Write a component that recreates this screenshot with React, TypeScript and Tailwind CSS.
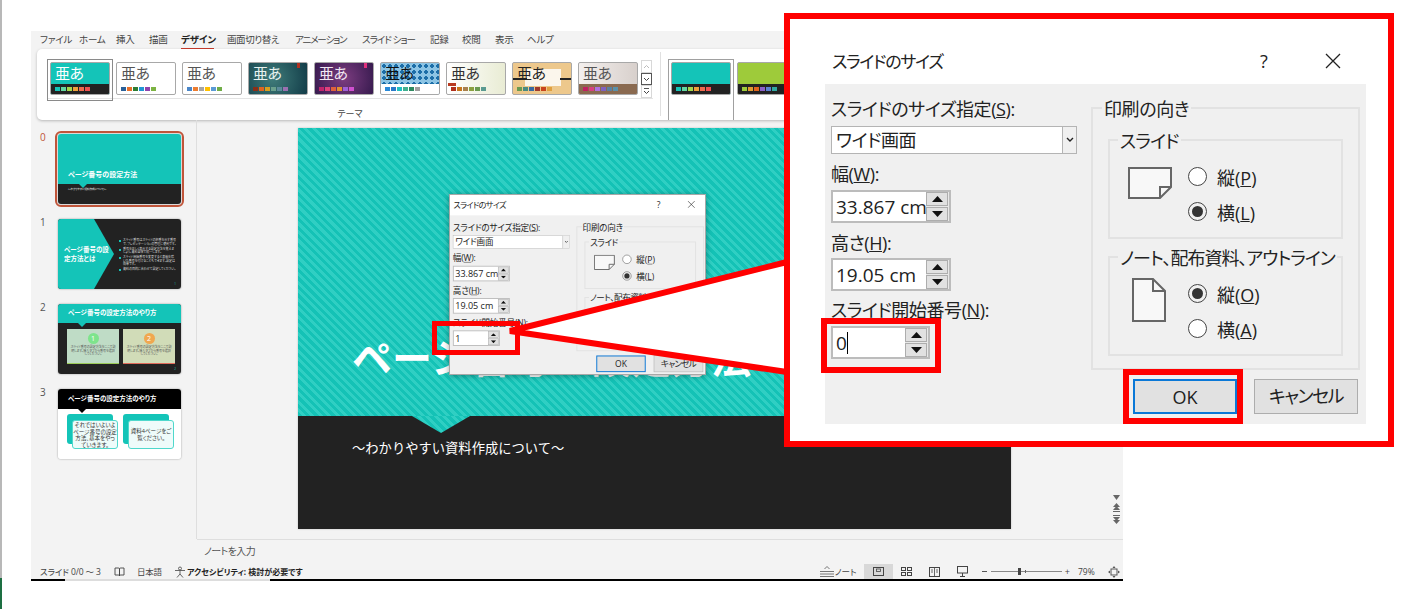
import React from "react";

const tabs: [string, string][] = [
  ["ファイル", "w-[26px]"], ["ホーム", "w-[24px]"], ["挿入", "w-[20px]"], ["描画", "w-[19px]"], ["デザイン", "w-[33px]"],
  ["画面切り替え", "w-[55px] tracking-[-0.4px]"], ["アニメーション", "w-[54px] tracking-[-1.1px]"], ["スライド ショー", "w-[55px] tracking-[-0.9px]"], ["記録", "w-[19px]"], ["校閲", "w-[20px]"], ["表示", "w-[19px]"], ["ヘルプ", "w-[24px]"],
];

type CardProps = { bg: string; text: string; swatches: string[]; band?: string; children?: React.ReactNode };

function ThemeCard({ bg, text, swatches, band = "", children }: CardProps) {
  return (
    <div className={`relative w-[60px] h-[33px] shrink-0 rounded-[2px] border border-[#a8a8a8] overflow-hidden flex flex-col ${bg}`}>
      {children}
      <div className={`relative flex-1 pl-[4px] pt-[1px] text-[15px] leading-[19px] tracking-[-0.5px] ${text}`}>亜あ</div>
      <div className={`relative h-[10px] flex gap-[1px] items-center pl-[4px] ${band}`}>
        {swatches.map((c, i) => (
          <span key={i} className="w-[5px] h-[3.5px]" style={{ backgroundColor: c }} />
        ))}
      </div>
    </div>
  );
}

function Gallery() {
  return (
    <div className="flex gap-[6px] w-[587px]">
      <div className="outline outline-[#8a8a8a] outline-offset-[2px]">
        <ThemeCard bg="bg-[#14c4b8]" text="text-white" band="bg-[#222222]" swatches={["#14c4b8", "#62d6a0", "#a4d64a", "#eda03c", "#f0694e", "#f05050"]} />
      </div>
      <ThemeCard bg="bg-white" text="text-[#555555]" swatches={["#2a6099", "#e8702a", "#2e7d32", "#2196d3", "#8e44ad", "#7cb342"]} />
      <ThemeCard bg="bg-white" text="text-[#555555]" swatches={["#4a86c8", "#ed7d31", "#a5a5a5", "#ffc000", "#5b9bd5", "#70ad47"]} />
      <ThemeCard bg="bg-[radial-gradient(circle_at_40%_50%,#3f7c7a,#123c48)]" text="text-[#e8f2f0]" swatches={["#8a2f18", "#e0641e", "#d8a01e", "#6aa08c", "#5a8a9a", "#9a70b0"]}>
        <span className="absolute right-[7px] top-0 w-[3px] h-[5px] bg-[#b03020]" />
      </ThemeCard>
      <ThemeCard bg="bg-[radial-gradient(circle_at_50%_50%,#7c3c80,#361a4e)]" text="text-[#f2e8f2]" swatches={["#c0246c", "#e0407c", "#e0603c", "#e09030", "#a060d8", "#d050d0"]}>
        <span className="absolute right-[6px] top-0 w-[3px] h-[5px] bg-[#e0307c]" />
      </ThemeCard>
      <ThemeCard bg="bg-[radial-gradient(#1c6ea8_42%,#8cc4e4_46%)] bg-[length:6px_6px]" text="text-[#111111]" band="bg-white" swatches={["#2a8ad8", "#2a7ac8", "#20c0c0", "#40b090", "#308a60", "#a0a0a0"]} />
      <ThemeCard bg="bg-[linear-gradient(90deg,#ffffff,#e9ecd4)]" text="text-[#333333]" swatches={["#b0301c", "#c8761c", "#a8804c", "#8aa040", "#6a9a50", "#5a9a90"]}>
        <span className="absolute left-[1px] top-[20px] w-[8px] h-[3px] bg-[#b83a20]" />
      </ThemeCard>
      <ThemeCard bg="bg-[#edc88c]" text="text-[#222222]" swatches={["#6a9a50", "#4a8a80", "#3a6aa0", "#a03a2c", "#c8441c", "#e0a040"]}>
        <span className="absolute left-[12px] top-[6px] w-[36px] h-[17px] bg-[#fbf6ec]" />
        <span className="absolute left-0 top-[15px] w-[14px] h-[2px] bg-[#222222]" />
        <span className="absolute right-0 top-[15px] w-[11px] h-[2px] bg-[#222222]" />
      </ThemeCard>
      <ThemeCard bg="bg-[linear-gradient(90deg,#f4f0ee,#d8d0cc)]" text="text-[#555555]" band="bg-[#8a6a50]" swatches={["#c02060", "#d84080", "#b070e0", "#8060c0", "#5a80a0", "#5a90a8"]} />
    </div>
  );
}

function ScrollBtn({ active, down, bar }: { active?: boolean; down?: boolean; bar?: boolean }) {
  return (
    <div className={`w-[11px] h-[13px] flex flex-col items-center justify-center ${active ? "border border-[#555555] bg-white" : "border border-[#d8d8d8] bg-white"}`}>
      {bar && <span className="w-[5px] h-px bg-[#555555] mb-px" />}
      <svg width="7" height="5" viewBox="0 0 7 5" className={down ? "" : "rotate-180"}>
        <path d="M1 1l2.5 2.5L6 1" fill="none" stroke={active || bar ? "#444" : "#bbb"} strokeWidth="1" />
      </svg>
    </div>
  );
}

function Ribbon() {
  return (
    <div className="ml-[6px] h-[71px] rounded-[5px] bg-white shadow-[0_1px_3px_rgba(0,0,0,0.25)] flex overflow-hidden shrink-0">
      <div className="ml-[10px] w-[606px] flex flex-col">
        <div className="pt-[13px] pl-[3px] h-[50px] border-b border-[#e4e4e4] flex gap-[4px]">
          <Gallery />
          <div className="-mt-[2px] flex flex-col">
            <ScrollBtn />
            <ScrollBtn active down />
            <ScrollBtn down bar />
          </div>
        </div>
        <div className="text-center text-[9px] leading-[29px] text-[#444444]">テーマ</div>
      </div>
      <div className="ml-[7px] mt-[3px] h-[64px] w-px bg-[#e0e0e0]" />
      <div className="ml-[10px] pt-[13px] flex gap-[6px]">
        <div className="outline outline-[#a0a0a0] outline-offset-[2px]">
          <ThemeCard bg="bg-[#14c4b8]" text="text-transparent" band="bg-[#222222]" swatches={["#14c4b8", "#62d6a0", "#a4d64a", "#eda03c", "#f0694e", "#f05050"]} />
        </div>
        <ThemeCard bg="bg-[#9ecb3a]" text="text-transparent" band="bg-[#222222]" swatches={["#9ecb3a", "#e09a30", "#e0641e", "#8a60c8", "#5a80d0", "#30a8a0"]} />
      </div>
    </div>
  );
}

function ThumbRow({ n, active, children }: { n: string; active?: boolean; children: React.ReactNode }) {
  return (
    <div className="flex h-[70px]">
      <div className={`w-[18px] text-[10px] leading-[6px] ${active ? "text-[#c0553a]" : "text-[#555555]"}`}>{n}</div>
      <div className={`relative w-[123px] h-[70px] rounded-[3px] overflow-hidden shadow-[0_0_2px_rgba(0,0,0,0.4)] ${active ? "outline-2 outline-[#c0553a] outline-offset-[1px]" : ""}`}>
        {children}
      </div>
    </div>
  );
}

function Thumb0() {
  return (
    <div className="h-full flex flex-col">
      <div className="h-[50px] bg-[#14c4b8] flex items-end pl-[10px] pb-[5px] text-[7px] leading-[9px] font-bold text-white">ページ番号の設定方法</div>
      <div className="relative flex-1 bg-[#222222] pl-[10px] pt-[2px] text-[2.5px] leading-[6px] text-white">
        <span className="absolute left-[21px] top-0 w-0 h-0 border-x-[4px] border-t-[4px] border-x-transparent border-t-[#14c4b8]" />
        ～わかりやすい資料作成について～
      </div>
    </div>
  );
}

function Thumb1() {
  const bullets = ["スライド番号はスライドの順番を示す番号で、プレゼンテーションの管理に便利です。", "番号を正しく表示する設定方法を覚えましょう。資料全体で統一します。", "スライド開始番号を変更すると表紙を除いた番号を付けることもできます。設定は簡単です。", "資料の目的に合わせて設定してください。"];
  return (
    <div className="h-full bg-[#222222] flex">
      <svg className="absolute inset-0" width="123" height="70" viewBox="0 0 123 70"><polygon points="0,0 36,0 56,35 36,70 0,70" fill="#14c4b8" /></svg>
      <div className="relative w-[52px] pl-[6px] pt-[26px] text-[6.5px] leading-[9px] font-bold text-white">ページ番号の設定方法とは</div>
      <div className="relative w-[57px] ml-[9px] pt-[20px] flex flex-col gap-[1.5px]">
        {bullets.map((b) => (
          <div key={b} className="flex gap-[2px] text-[3px] leading-[3.5px] text-[#dddddd]">
            <span className="w-[2px] h-[2px] mt-[1px] shrink-0 bg-[#14c4b8]" />
            <span>{b}</span>
          </div>
        ))}
      </div>
      <span className="absolute right-[5px] bottom-[3px] text-[3px] leading-[4px] text-[#14c4b8]">1</span>
    </div>
  );
}

function Thumb2() {
  const cards = [
    { bg: "bg-[#bfdcc6]", bar: "border-[#9ccc58]", c: "bg-[#7ee48c]", n: "1" },
    { bg: "bg-[#d1dcb8]", bar: "border-[#e06a5a]", c: "bg-[#f0a850]", n: "2" },
  ];
  return (
    <div className="h-full bg-[#222222] flex flex-col">
      <div className="relative h-[19px] shrink-0 bg-[#14c4b8] pl-[10px] text-[6.5px] leading-[18px] font-bold text-white">
        ページ番号の設定方法のやり方
        <span className="absolute left-[20px] top-[19px] w-0 h-0 border-x-[4px] border-t-[4px] border-x-transparent border-t-[#14c4b8]" />
      </div>
      <div className="flex gap-[4px] pl-[9px] pt-[6px]">
        {cards.map((c) => (
          <div key={c.n} className={`w-[52px] h-[35px] border-b ${c.bar} ${c.bg} flex flex-col items-center pt-[4px]`}>
            <div className={`w-[11px] h-[11px] rounded-full ${c.c} text-white text-[7px] leading-[11px] text-center`}>{c.n}</div>
            <div className="mt-[2px] px-[3px] text-[3px] leading-[3.5px] text-[#555555] text-center">スライド番号の設定方法をここで説明します。挿入タブから番号を選択してください。</div>
          </div>
        ))}
      </div>
      <span className="absolute right-[5px] bottom-[3px] text-[3px] leading-[4px] text-[#14c4b8]">2</span>
    </div>
  );
}

function Thumb3() {
  return (
    <div className="h-full bg-white flex flex-col">
      <div className="relative h-[20px] shrink-0 bg-black pl-[10px] text-[6.5px] leading-[19px] font-bold text-white">
        ページ番号の設定方法のやり方
        <span className="absolute left-[20px] top-[20px] w-0 h-0 border-x-[4px] border-t-[4px] border-x-transparent border-t-black" />
      </div>
      <div className="flex gap-[4px] pl-[9px] pt-[5px]">
        <div className="relative w-[52px] h-[35px]">
          <div className="absolute left-0 top-0 w-[46px] h-[30px] rounded-[3px] bg-[#14c4b8]" />
          <div className="absolute left-[5px] top-[6px] w-[46px] h-[29px] rounded-[3px] border border-[#4fd8cc] bg-[#eefbfa] pt-[1px] text-center text-[5.500px] leading-[6.500px] whitespace-nowrap text-[#333333]">
            それではいよいよ<br />ページ番号の設定<br />方法、基本をやっ<br />ていきます。
          </div>
        </div>
        <div className="relative w-[52px] h-[35px]">
          <div className="absolute left-0 top-0 w-[46px] h-[30px] rounded-[3px] bg-[#14c4b8]" />
          <div className="absolute left-[5px] top-[6px] w-[46px] h-[29px] rounded-[3px] border border-[#4fd8cc] bg-[#eefbfa] pt-[7px] text-center text-[5.500px] leading-[6.500px] whitespace-nowrap text-[#333333]">
            資料4ページをご<br />覧ください。
          </div>
        </div>
      </div>
    </div>
  );
}

function Panel() {
  return (
    <div className="w-[166px] shrink-0 border-r border-[#dedede] pl-[9px] pt-[14px] flex flex-col gap-[15px]">
      <ThumbRow n="0" active><Thumb0 /></ThumbRow>
      <ThumbRow n="1"><Thumb1 /></ThumbRow>
      <ThumbRow n="2"><Thumb2 /></ThumbRow>
      <ThumbRow n="3"><Thumb3 /></ThumbRow>
    </div>
  );
}

function Spin({ w, value, cursor }: { w: string; value: string; cursor?: boolean }) {
  const btn = "w-[22px] h-[14px] bg-[#e1e1e1] border border-[#adadad] flex items-center justify-center";
  return (
    <div className={`${w} h-[33px] border-2 border-[#bcbcbc] bg-white flex items-center justify-between`}>
      <div className="pl-[3px] text-[19px] leading-[28px] text-[#222222] flex-1 overflow-hidden whitespace-nowrap flex items-center">
        {value}
        {cursor && <span className="w-px h-[22px] bg-black" />}
      </div>
      <div className="h-full bg-[#e8e8e8] pr-[1px] flex flex-col justify-center gap-[1px] shrink-0">
        <div className={btn}><svg width="11" height="6" viewBox="0 0 11 6"><path d="M5.500 0L11 6H0z" fill="#111" /></svg></div>
        <div className={btn}><svg width="11" height="6" viewBox="0 0 11 6"><path d="M5.500 6L11 0H0z" fill="#111" /></svg></div>
      </div>
    </div>
  );
}

function Radio({ on, label, k }: { on?: boolean; label: string; k: string }) {
  return (
    <div className="h-[35px] flex items-center gap-[10px]">
      <span className={`w-[19px] h-[19px] rounded-full border border-[#444444] flex items-center justify-center ${on ? "bg-[#f0f0f0]" : "bg-white"}`}>
        {on && <span className="w-[11px] h-[11px] rounded-full bg-[#333333]" />}
      </span>
      <span className="pt-[3px] text-[18px] leading-[24px] text-[#222222]">{label}(<span className="underline">{k}</span>)</span>
    </div>
  );
}

function Label({ text, k, mt }: { text: string; k: string; mt: string }) {
  return (
    <div className={`h-[24px] text-[18px] leading-[24px] tracking-[-0.4px] whitespace-nowrap text-[#222222] ${mt}`}>
      {text}(<span className="underline">{k}</span>):
    </div>
  );
}

function Dialog({ value, cursor }: { value: string; cursor?: boolean }) {
  return (
    <div className="w-[541px] h-[385px] bg-white flex flex-col">
      <div className="h-[45px] shrink-0 pl-[7px] flex items-center text-[17px] tracking-[-1.300px] text-[#222222] relative">
        スライドのサイズ
        <span className="absolute left-[435px] top-[9px] text-[18px] leading-[26px]">?</span>
        <svg className="absolute left-[500px] top-[14px]" width="16" height="16" viewBox="0 0 16 16"><path d="M1 1l14 14M15 1L1 15" stroke="#222" strokeWidth="1.3" fill="none" /></svg>
      </div>
      <div className="h-[340px] bg-[#f0f0f0] flex flex-col">
        <div className="flex h-[286px]">
          <div className="w-[266px] pl-[6px] pt-[13px]">
            <Label text="スライドのサイズ指定" k="S" mt="" />
            <div className="mt-[5px] w-[246px] h-[28px] border border-[#b4b4b4] bg-white flex">
              <div className="flex-1 pl-[4px] text-[18px] leading-[27px] tracking-[-0.4px] text-[#222222]">ワイド画面</div>
              <div className="w-[14px] border-l border-[#b4b4b4] bg-[#f0f0f0] flex items-center justify-center">
                <svg width="8" height="6" viewBox="0 0 8 6"><path d="M1 1l3 3 3-3" fill="none" stroke="#222" strokeWidth="1.4" /></svg>
              </div>
            </div>
            <Label text="幅" k="W" mt="mt-[8px]" />
            <div className="mt-[4px]"><Spin w="w-[120px]" value="33.867 cm" /></div>
            <Label text="高さ" k="H" mt="mt-[8px]" />
            <div className="mt-[3px]"><Spin w="w-[120px]" value="19.05 cm" /></div>
            <Label text="スライド開始番号" k="N" mt="mt-[7px]" />
            <div className="mt-[4px]"><Spin w="w-[99px]" value={value} cursor={cursor} /></div>
          </div>
          <div className="w-[269px] pt-[11px]">
            <fieldset className="border-2 border-[#e2e2e2] px-[15px] h-[275px]">
              <legend className="-ml-[6px] px-[2px] pt-[2px] text-[18px] leading-[24px] tracking-[-0.4px] text-[#222222]">印刷の向き</legend>
              <fieldset className="mt-[6px] border-2 border-[#e2e2e2] h-[112px]">
                <legend className="ml-[8px] px-[2px] pt-[2px] text-[18px] leading-[24px] tracking-[-0.8px] text-[#222222]">スライド</legend>
                <div className="flex pt-[6px] pl-[18px]">
                  <svg className="mt-[8px] shrink-0" width="45" height="32" viewBox="0 0 45 32"><path d="M1 1h42v19L32 31H1z" fill="#f8f8f8" stroke="#666" strokeWidth="2" /><path d="M43 20H32v11" fill="none" stroke="#666" strokeWidth="2" /></svg>
                  <div className="ml-[15px]">
                    <Radio label="縦" k="P" />
                    <Radio on label="横" k="L" />
                  </div>
                </div>
              </fieldset>
              <fieldset className="mt-[5px] border-2 border-[#e2e2e2] h-[112px]">
                <legend className="ml-[8px] px-[2px] pt-[2px] text-[18px] leading-[24px] tracking-[-1px] whitespace-nowrap text-[#222222]">ノート、配布資料、アウトライン</legend>
                <div className="flex pt-[6px] pl-[22px]">
                  <svg className="mt-[2px] shrink-0" width="34" height="44" viewBox="0 0 34 44"><path d="M1 1h20l12 12v30H1z" fill="#f8f8f8" stroke="#666" strokeWidth="2" /><path d="M21 1v12h12" fill="none" stroke="#666" strokeWidth="2" /></svg>
                  <div className="ml-[22px]">
                    <Radio on label="縦" k="O" />
                    <Radio label="横" k="A" />
                  </div>
                </div>
              </fieldset>
            </fieldset>
          </div>
        </div>
        <div className="mt-[9px] h-[35px] pr-[8px] flex justify-end gap-[17px]">
          <div className="w-[104px] h-[35px] border-2 border-[#0a78d7] bg-[#e1e1e1] text-center text-[18px] leading-[32px] text-[#222222]">OK</div>
          <div className="w-[104px] h-[35px] border border-[#adadad] bg-[#e1e1e1] text-center text-[18px] leading-[33px] tracking-[-1.500px] text-[#222222]">キャンセル</div>
        </div>
      </div>
    </div>
  );
}

function Slide() {
  return (
    <div className="relative w-[713px] h-[401px] flex flex-col shadow-[0_0_2px_rgba(0,0,0,0.2)]">
      <div className="h-[288px] bg-[repeating-linear-gradient(45deg,#14c2b6_0,#14c2b6_3px,#2fcfc3_3px,#2fcfc3_6px)] flex items-end pl-[54px] pb-[30px] text-[40px] leading-[56px] font-bold text-white whitespace-nowrap [font-feature-settings:normal]">
        ページ番号の設定方法
      </div>
      <div className="relative flex-1 bg-[#222222] pl-[54px] pt-[21px] text-[13.300px] leading-[22px] text-white [font-feature-settings:normal]">
        <span className="absolute left-[114px] top-0 w-[58px] h-[17px] bg-[repeating-linear-gradient(45deg,#14c2b6_0,#14c2b6_3px,#2fcfc3_3px,#2fcfc3_6px)] [clip-path:polygon(0_0,100%_0,50%_100%)]" />
        ～わかりやすい資料作成について～
      </div>
      <div className="absolute left-[151px] top-[66px] w-[257px] h-[181px] overflow-hidden border border-[#a8a8a8] shadow-[0_1px_6px_rgba(0,0,0,0.35)] bg-[#f0f0f0]">
        <div className="origin-top-left scale-[0.475] -mt-[1px]">
          <Dialog value="1" />
        </div>
      </div>
    </div>
  );
}

function StatusBar() {
  return (
    <div className="h-[15px] shrink-0 flex items-center text-[8.500px] leading-[15px] text-[#444444] relative">
      <div className="pl-[9px] w-[83px] whitespace-nowrap tracking-[-0.1px]">スライド 0/0 ～ 3</div>
      <svg width="11" height="10" viewBox="0 0 11 10"><path d="M1 1h3.500c.6 0 1 .4 1 1v7c0-.6-.4-1-1-1H1zM10 1H6.500c-.6 0-1 .4-1 1v7c0-.6.4-1 1-1H10z" fill="none" stroke="#444" strokeWidth=".9" /></svg>
      <div className="ml-[12px] w-[36px] whitespace-nowrap tracking-[-0.3px]">日本語</div>
      <svg width="12" height="12" viewBox="0 0 12 12" className="ml-[1px]"><circle cx="6" cy="2.500" r="1.500" fill="none" stroke="#444" strokeWidth=".8" /><path d="M1 4.500h10M6 5v3M6 8l-3 3.500M6 8l3 3.500" fill="none" stroke="#444" strokeWidth=".8" /></svg>
      <div className="ml-[1px] text-[8px] font-bold text-[#222222] whitespace-nowrap">アクセシビリティ: 検討が必要です</div>
      <div className="flex-1" />
      <svg width="14" height="11" viewBox="0 0 14 11"><path d="M0 5.500h14M0 8h14M0 10.500h14M4.500 3L7 .5 9.500 3" fill="none" stroke="#555" strokeWidth=".8" /></svg>
      <div className="ml-[1px] w-[29px] whitespace-nowrap">ノート</div>
      <div className="w-[29px] h-[15px] bg-[#d8d8d8] flex items-center justify-center">
        <svg width="11" height="9" viewBox="0 0 11 9"><rect x=".5" y=".5" width="10" height="8" fill="none" stroke="#444" /><rect x="3.500" y="2" width="4" height="2.500" fill="none" stroke="#444" strokeWidth=".8" /></svg>
      </div>
      <div className="w-[28px] flex justify-center">
        <svg width="11" height="9" viewBox="0 0 11 9"><rect x=".5" y=".5" width="4" height="3" fill="none" stroke="#444" /><rect x="6.500" y=".5" width="4" height="3" fill="none" stroke="#444" /><rect x=".5" y="5.500" width="4" height="3" fill="none" stroke="#444" /><rect x="6.500" y="5.500" width="4" height="3" fill="none" stroke="#444" /></svg>
      </div>
      <div className="w-[28px] flex justify-center">
        <svg width="11" height="10" viewBox="0 0 11 10"><rect x=".5" y=".5" width="10" height="9" fill="none" stroke="#444" /><path d="M5.500 .5v9M2 3h2M2 5h2M7 3h2M7 5h2" stroke="#444" strokeWidth=".8" /></svg>
      </div>
      <div className="w-[28px] flex justify-center">
        <svg width="11" height="11" viewBox="0 0 11 11"><rect x=".5" y=".5" width="10" height="6.500" fill="none" stroke="#444" /><path d="M5.500 7v3M3 10.500h5" stroke="#444" /></svg>
      </div>
      <div className="ml-[5px] flex items-center">
        <span className="w-[5px] h-px bg-[#555555]" />
        <div className="relative ml-[4px] w-[71px] h-px bg-[#888888]">
          <span className="absolute left-[27px] -top-[3px] w-[3px] h-[7px] bg-[#444444]" />
          <span className="absolute left-[34px] -top-[1px] w-px h-[3px] bg-[#666666]" />
        </div>
        <span className="ml-[3px] text-[9px]">+</span>
      </div>
      <div className="ml-[8px] w-[30px] whitespace-nowrap">79%</div>
      <svg width="12" height="12" viewBox="0 0 12 12"><rect x="3" y="3" width="6" height="6" fill="none" stroke="#555" /><path d="M6 0l1.500 2h-3zM6 12l1.500-2h-3zM0 6l2 1.500v-3zM12 6l-2 1.500v-3z" fill="#555" /></svg>
      <div className="w-[3px]" />
    </div>
  );
}

export default function App() {
  return (
    <div className="relative w-[1411px] h-[609px] overflow-hidden bg-white flex [font-family:'Open_Sans','Noto_Sans_CJK_JP',sans-serif] [font-feature-settings:'palt']">
      <div className="w-[2px] shrink-0 flex flex-col">
        <div className="h-[578px] bg-[#b8b8b8]" />
        <div className="flex-1 bg-[#1d6f42]" />
      </div>
      <div className="ml-[29px] mt-[31px] w-[1092px] h-[550px] bg-[#f3f3f3] flex flex-col">
        <div className="h-[18px] shrink-0 flex items-center pl-[9px] gap-[13px] text-[9.500px] leading-[16px] tracking-[-0.2px] text-[#444444] whitespace-nowrap">
          {tabs.map(([t, w]) => (
            <span key={t} className={`relative shrink-0 ${w} ${t === "デザイン" ? "font-bold text-[#222222]" : ""}`}>
              {t}
              {t === "デザイン" && <span className="absolute left-0 right-0 -bottom-[1px] h-[1.500px] bg-[#c0392b]" />}
            </span>
          ))}
        </div>
        <Ribbon />
        <div className="flex h-[419px] shrink-0">
          <Panel />
          <div className="relative flex-1 pl-[101px] pt-[8px]">
            <Slide />
            <div className="absolute right-[3px] bottom-[15px] flex flex-col items-center gap-[3px]">
              <svg width="7" height="5" viewBox="0 0 7 5"><path d="M0 0h7L3.500 5z" fill="#666" /></svg>
              <svg width="7" height="9" viewBox="0 0 7 9"><path d="M3.500 0L7 4H0zM3.500 3L7 7H0zM0 8h7v1H0z" fill="#666" /></svg>
              <svg width="7" height="9" viewBox="0 0 7 9"><path d="M0 0h7v1H0zM0 2h7L3.500 6zM0 5h7L3.500 9z" fill="#666" /></svg>
            </div>
          </div>
        </div>
        <div className="h-[25px] shrink-0 ml-[166px] border-t border-[#dedede] pl-[7px] text-[10px] leading-[22px] tracking-[-0.6px] text-[#555555]">ノートを入力</div>
        <StatusBar />
        <div className="h-[2px] shrink-0 flex">
          <span className="w-[34px] bg-black" />
          <span className="w-[205px] bg-[#dddddd]" />
          <span className="flex-1 bg-black" />
        </div>
      </div>

      <div className="absolute left-[432px] top-[321px] w-[88px] h-[34px] border-[5px] border-[#ff0000]" />
      <svg className="absolute left-[500px] top-[250px]" width="295" height="135" viewBox="0 0 295 135">
        <polygon points="10,81 287,12 287,122" fill="#ffffff" />
        <path d="M287 12L10 81L287 122" fill="none" stroke="#ff0000" strokeWidth="6" strokeLinejoin="miter" />
      </svg>
      <div className="absolute left-[784px] top-[13px] w-[610px] h-[434px] border-[6px] border-[#ff0000] bg-white pl-[35px] pt-[20px]">
        <Dialog value="0" cursor />
        <div className="absolute left-[31px] top-[299px] w-[120px] h-[55px] border-[6px] border-[#ff0000]" />
        <div className="absolute left-[333px] top-[350px] w-[120px] h-[55px] border-[6px] border-[#ff0000]" />
      </div>
    </div>
  );
}
